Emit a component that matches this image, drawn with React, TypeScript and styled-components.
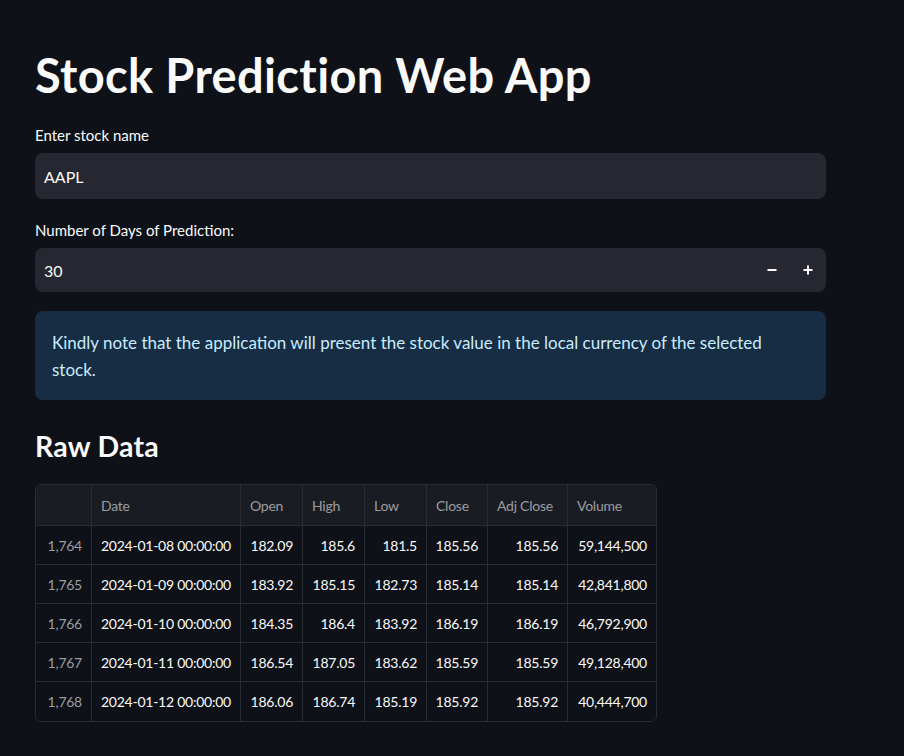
import React from "react";
import styled, { createGlobalStyle } from "styled-components";

const Global = createGlobalStyle`
  html, body { margin: 0; padding: 0; background: #0e1117; }
  body { font-family: Lato, "Noto Sans", sans-serif; color: #fafafa; }
  * { box-sizing: border-box; }
`;

const Page = styled.main`
  min-height: 756px;
  background: #0e1117;
  padding: 47px 78px 40px 35px;
`;

const Content = styled.div`
  width: 791px;
  display: flex;
  flex-direction: column;
`;

const Title = styled.h1`
  margin: 0;
  font-size: 47px;
  line-height: 56px;
  font-weight: 700;
  color: #fafafa;
  letter-spacing: 0.35px;
`;

const Label = styled.label<{ $top: number }>`
  display: block;
  margin-top: ${(p) => p.$top}px;
  font-size: 15px;
  line-height: 20px;
  color: #fafafa;
`;

const Field = styled.div<{ $h: number }>`
  margin-top: 8px;
  height: ${(p) => p.$h}px;
  background: #262730;
  border-radius: 8px;
  display: flex;
  align-items: center;
  padding-left: 9px;
  font-size: 16px;
  color: #fafafa;
`;

const FieldText = styled.span`
  flex: 1;
`;

const StepButton = styled.span`
  width: 36px;
  height: 100%;
  display: flex;
  align-items: center;
  justify-content: center;
  color: #fafafa;
`;

const Info = styled.div`
  margin-top: 19px;
  background: #172d43;
  border-radius: 8px;
  padding: 18px 60px 17px 17px;
  font-size: 17px;
  line-height: 27px;
  color: #c7ebff;
`;

const Subheader = styled.h2`
  margin: 28px 0 0;
  font-size: 28.5px;
  line-height: 36px;
  font-weight: 700;
  color: #fafafa;
  letter-spacing: 0.2px;
`;

const Table = styled.div`
  margin-top: 20px;
  width: 622px;
  border: 1px solid #2a2c34;
  border-radius: 6px;
  overflow: hidden;
  display: grid;
  grid-template-columns: 56px 149px 62px 62px 62px 61px 80px 88px;
  font-size: 14px;
  letter-spacing: -0.25px;
`;

const Cell = styled.div<{ $head?: boolean; $right?: boolean; $dim?: boolean; $lastCol?: boolean; $lastRow?: boolean }>`
  height: ${(p) => (p.$head ? 41 : 39)}px;
  display: flex;
  align-items: center;
  justify-content: ${(p) => (p.$right ? "flex-end" : "flex-start")};
  padding: 0 9px;
  background: ${(p) => (p.$head ? "#1a1c24" : "#0e1117")};
  color: ${(p) => (p.$head || p.$dim ? "#9b9ca0" : "#fafafa")};
  border-right: ${(p) => (p.$lastCol ? "none" : "1px solid #2a2c34")};
  border-bottom: ${(p) => (p.$lastRow ? "none" : "1px solid #2a2c34")};
  white-space: nowrap;
`;

const MinusIcon = () => (
  <svg width="12" height="12" viewBox="0 0 12 12">
    <path d="M1.5 6h9" stroke="#fafafa" strokeWidth="2" />
  </svg>
);

const PlusIcon = () => (
  <svg width="12" height="12" viewBox="0 0 12 12">
    <path d="M1.5 6h9M6 1.5v9" stroke="#fafafa" strokeWidth="2" />
  </svg>
);

const headers = ["", "Date", "Open", "High", "Low", "Close", "Adj Close", "Volume"];

const rows = [
  ["1,764", "2024-01-08 00:00:00", "182.09", "185.6", "181.5", "185.56", "185.56", "59,144,500"],
  ["1,765", "2024-01-09 00:00:00", "183.92", "185.15", "182.73", "185.14", "185.14", "42,841,800"],
  ["1,766", "2024-01-10 00:00:00", "184.35", "186.4", "183.92", "186.19", "186.19", "46,792,900"],
  ["1,767", "2024-01-11 00:00:00", "186.54", "187.05", "183.62", "185.59", "185.59", "49,128,400"],
  ["1,768", "2024-01-12 00:00:00", "186.06", "186.74", "185.19", "185.92", "185.92", "40,444,700"],
];

export default function App() {
  return (
    <>
      <Global />
      <Page>
        <Content>
          <Title>Stock Prediction Web App</Title>
          <Label $top={22}>Enter stock name</Label>
          <Field $h={46}>
            <FieldText>AAPL</FieldText>
          </Field>
          <Label $top={21}>Number of Days of Prediction:</Label>
          <Field $h={44}>
            <FieldText>30</FieldText>
            <StepButton>
              <MinusIcon />
            </StepButton>
            <StepButton>
              <PlusIcon />
            </StepButton>
          </Field>
          <Info>
            Kindly note that the application will present the stock value in the local currency of the selected stock.
          </Info>
          <Subheader>Raw Data</Subheader>
          <Table>
            {headers.map((h, i) => (
              <Cell key={"h" + i} $head $lastCol={i === headers.length - 1}>
                {h}
              </Cell>
            ))}
            {rows.map((r, ri) =>
              r.map((v, ci) => (
                <Cell
                  key={ri + "-" + ci}
                  $right={ci !== 1}
                  $dim={ci === 0}
                  $lastCol={ci === r.length - 1}
                  $lastRow={ri === rows.length - 1}
                >
                  {v}
                </Cell>
              ))
            )}
          </Table>
        </Content>
      </Page>
    </>
  );
}
